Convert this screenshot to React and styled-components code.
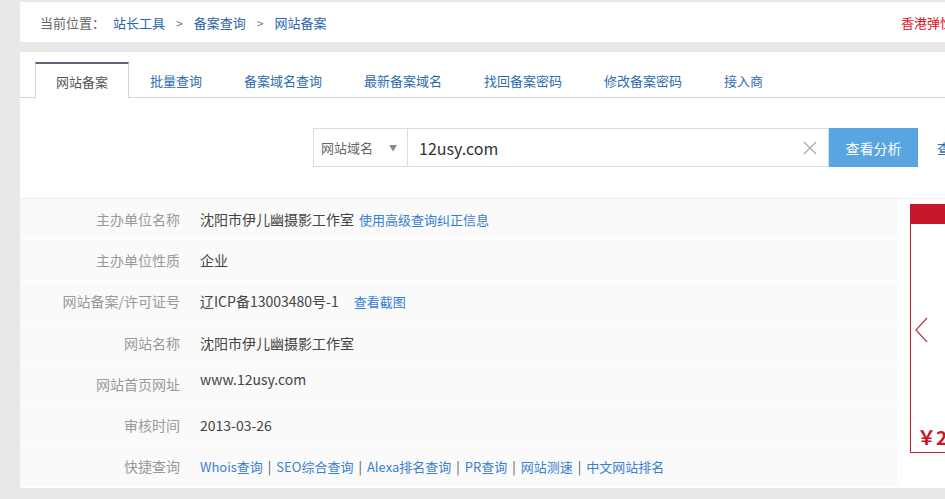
import React from "react";
import styled, { createGlobalStyle } from "styled-components";

const GlobalStyle = createGlobalStyle`
  html, body {
    margin: 0;
    padding: 0;
    background: #e8e8e8;
    overflow: hidden;
  }
  body {
    font-family: "Noto Sans CJK SC", "Open Sans", sans-serif;
    color: #333;
  }
  a {
    text-decoration: none;
  }
`;

const Page = styled.div`
  width: 1200px;
  padding: 2px 0 0 20px;
  display: flex;
  flex-direction: column;
  gap: 10px;
`;

const TopBar = styled.div`
  background: #fff;
  height: 40px;
  display: flex;
  align-items: center;
  padding: 0 20px;
  font-size: 13px;
`;

const Crumbs = styled.div`
  display: flex;
  align-items: center;
  color: #666;
  & a {
    color: #2d66a8;
  }
  & .sep {
    color: #777;
    margin: 0 11px;
    font-size: 12px;
  }
  & .label {
    margin-right: 8px;
  }
`;

const Notice = styled.a`
  margin-left: auto;
  width: 299px;
  color: #e0141e !important;
  white-space: nowrap;
`;

const Panel = styled.div`
  background: #fff;
  padding-top: 10px;
  height: 426px;
`;

const Tabs = styled.div`
  display: flex;
  padding-left: 15px;
  border-bottom: 1px solid #d4d4d4;
  height: 35px;
`;

const Tab = styled.a`
  display: flex;
  align-items: center;
  padding: 0 20px;
  box-sizing: border-box;
  font-size: 13px;
  border: 1px solid ${(p) => (p.active ? "#d8d8d8" : "transparent")};
  border-top: 2px solid ${(p) => (p.active ? "#5b6577" : "transparent")};
  border-bottom: none;
  background: #fff;
  color: ${(p) => (p.active ? "#555" : "#2e6cb0")};
  margin-bottom: ${(p) => (p.active ? "-1px" : "0")};
  height: ${(p) => (p.active ? "36px" : "35px")};
`;

const SearchRow = styled.div`
  display: flex;
  align-items: center;
  padding: 30px 0 0 293px;
  height: 39px;
`;

const Select = styled.div`
  width: 95px;
  height: 39px;
  box-sizing: border-box;
  border: 1px solid #dcdcdc;
  display: flex;
  align-items: center;
  padding: 0 7px;
  font-size: 13px;
  color: #666;
  & .caret {
    margin-left: auto;
    font-size: 8px;
    color: #888;
    margin-right: 3px;
  }
`;

const InputBox = styled.div`
  width: 421px;
  height: 39px;
  box-sizing: border-box;
  border: 1px solid #dcdcdc;
  border-left: none;
  display: flex;
  align-items: center;
  padding: 0 11px;
  font-size: 16px;
  color: #333;
  & svg {
    margin-left: auto;
  }
`;

const Button = styled.button`
  width: 89px;
  height: 39px;
  border: none;
  background: #58a5e1;
  color: #fff;
  font-size: 14px;
  font-family: inherit;
  padding: 0;
`;

const SideLink = styled.a`
  margin-left: 19px;
  color: #2e6cb0;
  font-size: 14px;
  white-space: nowrap;
`;

const Body = styled.div`
  margin-top: 31px;
  border-top: 1px solid #ececec;
  display: flex;
`;

const Rows = styled.div`
  width: 878px;
  display: flex;
  flex-direction: column;
`;

const Row = styled.div`
  height: 40.2px;
  border-bottom: 1px solid #fff;
  background: #fafafa;
  display: flex;
  align-items: center;
  font-size: 14px;
`;

const Label = styled.div`
  width: 160px;
  text-align: right;
  color: #999;
  margin-right: 20px;
`;

const Value = styled.div`
  color: #444;
  display: flex;
  align-items: center;
  gap: ${(p) => p.gap || 5}px;
  padding-bottom: ${(p) => (p.raised ? 10 : 0)}px;
  & a {
    color: #3580d4;
    font-size: 13px;
  }
`;

const Quick = styled.div`
  font-size: 13px;
  color: #3a7fd0;
  & .bar {
    color: #555;
    margin: 0 5px;
  }
`;

const Side = styled.div`
  border-left: 3px solid #fcfcfc;
  margin-left: 1px;
  padding: 5px 0 0 8px;
  flex: 1;
`;

const Ad = styled.div`
  height: 248px;
  border: 1px solid #b61f2d;
  border-top: none;
  display: flex;
  flex-direction: column;
`;

const AdHead = styled.div`
  height: 20px;
  background: #c7182b;
`;

const AdBody = styled.div`
  flex: 1;
  padding: 0 0 0 6px;
  display: flex;
  flex-direction: column;
`;

const Arrow = styled.div`
  margin-top: 93px;
  margin-left: -2px;
`;

const Price = styled.div`
  margin-top: auto;
  margin-bottom: 2px;
  color: #c8162a;
  font-weight: bold;
  font-size: 19px;
  white-space: nowrap;
  font-family: "Noto Sans CJK SC", sans-serif;
`;

const tabs = ["网站备案", "批量查询", "备案域名查询", "最新备案域名", "找回备案密码", "修改备案密码", "接入商"];
const quick = ["Whois查询", "SEO综合查询", "Alexa排名查询", "PR查询", "网站测速", "中文网站排名"];

export default function App() {
  return (
    <>
      <GlobalStyle />
      <Page>
        <TopBar>
          <Crumbs>
            <span className="label">当前位置：</span>
            <a href="#">站长工具</a>
            <span className="sep">&gt;</span>
            <a href="#">备案查询</a>
            <span className="sep">&gt;</span>
            <a href="#">网站备案</a>
          </Crumbs>
          <Notice href="#">香港弹性云服务器，低至1折</Notice>
        </TopBar>
        <Panel>
          <Tabs>
            {tabs.map((t, i) => (
              <Tab key={t} href="#" active={i === 0 ? 1 : 0}>
                {t}
              </Tab>
            ))}
          </Tabs>
          <SearchRow>
            <Select>
              网站域名<span className="caret">▼</span>
            </Select>
            <InputBox>
              12usy.com
              <svg width="14" height="14" viewBox="0 0 14 14">
                <path d="M1 1L13 13M13 1L1 13" stroke="#aaa" strokeWidth="1.2" fill="none" />
              </svg>
            </InputBox>
            <Button>查看分析</Button>
            <SideLink href="#">查看历史</SideLink>
          </SearchRow>
          <Body>
            <Rows>
              <Row>
                <Label>主办单位名称</Label>
                <Value>
                  沈阳市伊儿幽摄影工作室<a href="#">使用高级查询纠正信息</a>
                </Value>
              </Row>
              <Row>
                <Label>主办单位性质</Label>
                <Value>企业</Value>
              </Row>
              <Row>
                <Label>网站备案/许可证号</Label>
                <Value gap={15}>
                  辽ICP备13003480号-1<a href="#">查看截图</a>
                </Value>
              </Row>
              <Row>
                <Label>网站名称</Label>
                <Value>沈阳市伊儿幽摄影工作室</Value>
              </Row>
              <Row>
                <Label>网站首页网址</Label>
                <Value raised>www.12usy.com</Value>
              </Row>
              <Row>
                <Label>审核时间</Label>
                <Value>2013-03-26</Value>
              </Row>
              <Row>
                <Label>快捷查询</Label>
                <Quick>
                  {quick.map((q, i) => (
                    <React.Fragment key={q}>
                      {i > 0 && <span className="bar">|</span>}
                      <span>{q}</span>
                    </React.Fragment>
                  ))}
                </Quick>
              </Row>
            </Rows>
            <Side>
              <Ad>
                <AdHead />
                <AdBody>
                  <Arrow>
                    <svg width="14" height="26" viewBox="0 0 14 26">
                      <path d="M12 1L1 13L12 25" stroke="#c43d4c" strokeWidth="1.3" fill="none" />
                    </svg>
                  </Arrow>
                  <Price>￥29</Price>
                </AdBody>
              </Ad>
            </Side>
          </Body>
        </Panel>
      </Page>
    </>
  );
}
